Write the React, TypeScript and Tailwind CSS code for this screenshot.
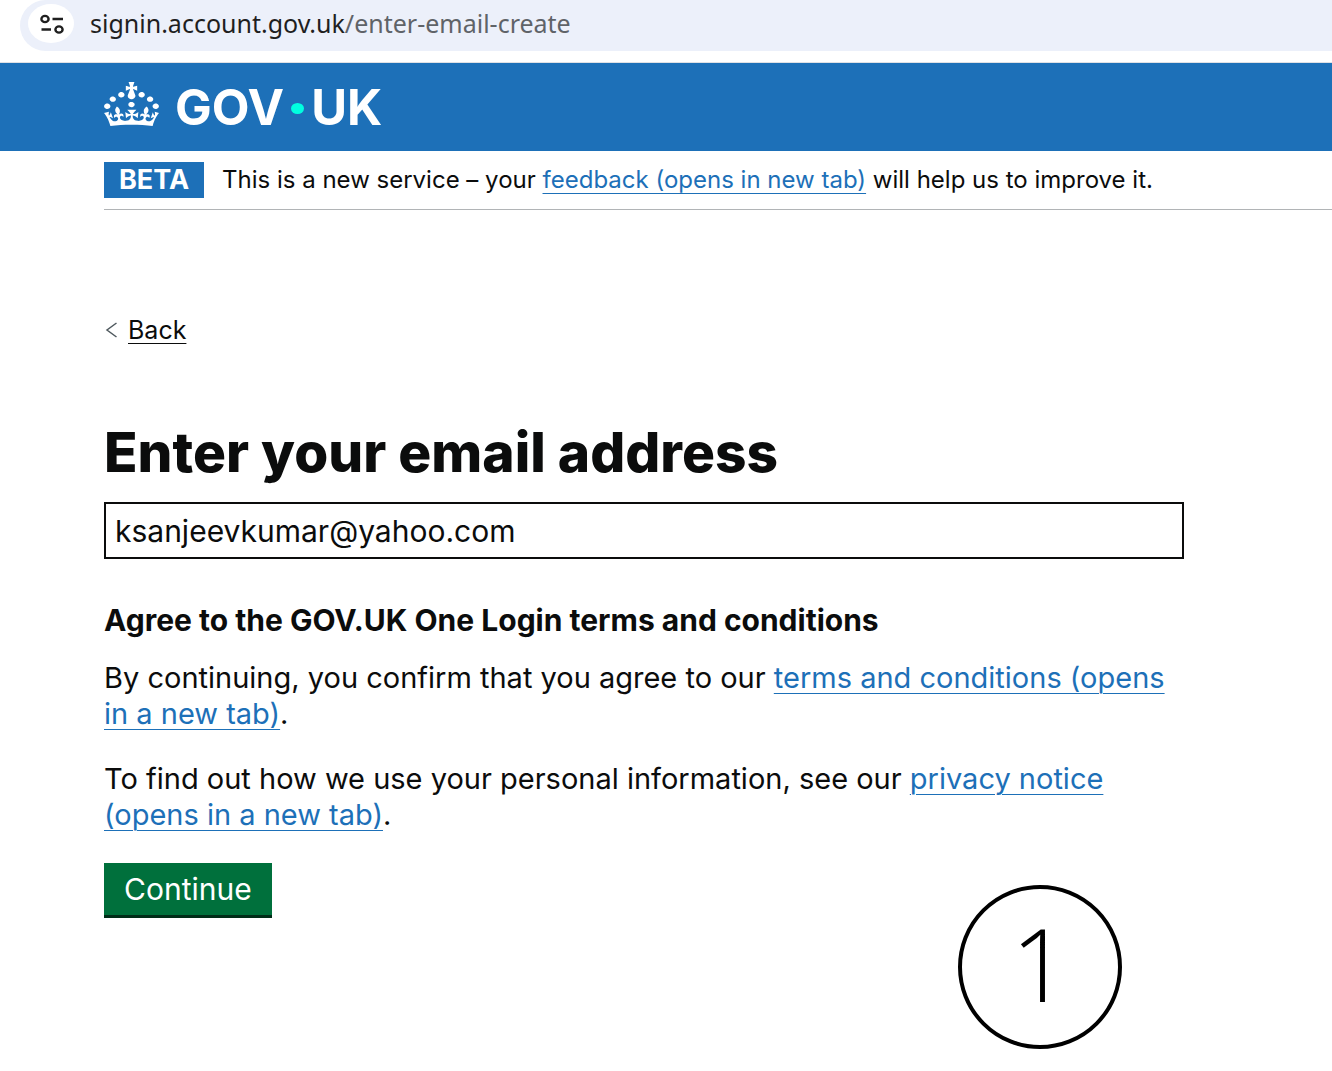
import { useState } from "react";

const link = "text-[#1d70b8] underline decoration-1 underline-offset-[5px]";
const linkTail = "inline-block underline decoration-1 underline-offset-[5px]";

function AddressBar() {
  return (
    <div className="h-[63px] border-b border-[#dfe1e5] pl-5">
      <div className="flex h-[51px] items-center rounded-bl-[26px] rounded-tl-[26px] bg-[#ecf0fa] pl-2 pb-1">
        <button
          type="button"
          aria-label="View site information"
          className="flex h-[39px] w-[46px] items-center justify-center rounded-[50%] bg-white pl-[2px]"
        >
          <svg width="24" height="20" viewBox="0 0 24 20" fill="none" stroke="#1f1f1f" strokeWidth="2.4">
            <ellipse cx="5" cy="5" rx="3.6" ry="3.1" />
            <path d="M12.5 5H23M1.5 15.5H11" />
            <ellipse cx="19" cy="15.5" rx="3.6" ry="3.1" />
          </svg>
        </button>
        <p className="pl-4 pb-[2px] font-['Noto_Sans',sans-serif] text-[25px] leading-8 whitespace-nowrap text-[#5f6368]">
          <span className="text-[#1f1f1f]">signin.account.gov.uk</span>/enter-email-create
        </p>
      </div>
    </div>
  );
}

function Crown() {
  return (
    <svg width="55" height="44" viewBox="0 0 32 30" preserveAspectRatio="none" fill="currentColor" aria-hidden="true">
      <path
        fillRule="evenodd"
        d="M22.6 10.4c-1 .4-2-.1-2.4-1-.4-.9.1-2 1-2.4.9-.4 2 .1 2.4 1s-.1 2-1 2.4m-5.9 6.7c-.9.4-2-.1-2.4-1-.4-.9.1-2 1-2.4.9-.4 2 .1 2.4 1s-.1 2-1 2.4m10.8-3.7c-1 .4-2-.1-2.4-1-.4-.9.1-2 1-2.4.9-.4 2 .1 2.4 1s0 2-1 2.4m3.3 4.8c-1 .4-2-.1-2.4-1-.4-.9.1-2 1-2.4.9-.4 2 .1 2.4 1s-.1 2-1 2.4M17 4.7l2.3 1.2V2.5l-2.3.7-.2-.2.9-3h-3.4l.9 3-.2.2c-.1.1-2.3-.7-2.3-.7v3.4L15 4.7c.1.1.1.2.2.2l-1.3 4c-.1.2-.1.4-.1.6 0 1.1.8 2 1.9 2.2h.7c1-.2 1.9-1.1 1.9-2.1 0-.2 0-.4-.1-.6l-1.3-4c-.1-.2 0-.2.1-.3m-7.6 5.7c.9.4 2-.1 2.4-1 .4-.9-.1-2-1-2.4-.9-.4-2 .1-2.4 1s0 2 1 2.4m-5 3c.9.4 2-.1 2.4-1 .4-.9-.1-2-1-2.4-.9-.4-2 .1-2.4 1s.1 2 1 2.4m-3.2 4.8c.9.4 2-.1 2.4-1 .4-.9-.1-2-1-2.4-.9-.4-2 .1-2.4 1s0 2 1 2.4m14.8 11c4.4 0 8.6.3 12.3.8 1.1-4.5 2.4-7 3.7-8.8l-2.5-.9c.2 1.3.3 1.9 0 2.7-.4-.4-.8-1.1-1.1-2.3l-1.2 4c.7-.5 1.3-.8 2-.9-1.1 2.5-2.6 3.1-3.5 3-1.1-.2-1.7-1.2-1.5-2.1.3-1.2 1.5-1.5 2.1-.1 1.1-2.3-.8-3-2-2.3 1.9-1.9 2.1-3.5.6-5.6-2.1 1.6-2.1 3.2-1.2 5.5-1.2-1.4-3.2-.6-2.5 1.6.9-1.4 2.1-.5 1.9.8-.2 1.1-1.7 2.1-3.5 1.9-2.7-.2-2.9-2.1-2.9-3.6.7-.1 1.9.5 2.9 1.9l.4-4.3c-1.1 1.1-2.1 1.4-3.2 1.4.4-1.2 2.1-3 2.1-3h-5.4s1.7 1.9 2.1 3c-1.1 0-2.1-.2-3.2-1.4l.4 4.3c1-1.4 2.2-2 2.9-1.9-.1 1.5-.2 3.4-2.9 3.6-1.9.2-3.4-.8-3.5-1.9-.2-1.3 1-2.2 1.9-.8.7-2.3-1.2-3-2.5-1.6.9-2.2.9-3.9-1.2-5.5-1.5 2-1.3 3.7.6 5.6-1.2-.7-3.1 0-2 2.3.6-1.4 1.8-1.1 2.1.1.2.9-.3 1.9-1.5 2.1-.9.2-2.4-.5-3.5-3 .6 0 1.2.3 2 .9l-1.2-4c-.3 1.1-.7 1.9-1.1 2.3-.3-.8-.2-1.4 0-2.7l-2.9.9C1.3 23 2.6 25.5 3.7 30c3.7-.5 7.9-.8 12.3-.8"
      />
    </svg>
  );
}

function Header() {
  return (
    <header className="flex h-[88px] items-center bg-[#1d70b8] pl-[104px] text-white">
      <a href="#home" aria-label="GOV.UK" className="flex items-center pb-[6px]">
        <Crown />
        <span className="ml-4 flex items-center pt-[8px] text-[49px] leading-[48px] font-bold">
          GOV
          <span className="mx-[7px] h-[11px] w-[13px] rounded-[50%] bg-[#00ffe0]" />
          UK
        </span>
      </a>
    </header>
  );
}

export default function App() {
  const [email, setEmail] = useState("ksanjeevkumar@yahoo.com");
  return (
    <div className="overflow-x-hidden bg-white font-['Inter',sans-serif] text-[#0b0c0c]">
      <AddressBar />
      <Header />
      <div className="ml-[104px] flex items-center border-b border-[#b1b4b6] pt-[11px] pb-[11px] text-[24px] leading-9">
        <strong className="bg-[#1d70b8] px-[15px] text-[27px] leading-9 font-bold text-white">BETA</strong>
        <p className="ml-[18px] whitespace-nowrap">
          This is a new service – your{" "}
          <a href="#feedback" className={link}>feedback (opens in new tab)</a> will help us to improve it.
        </p>
      </div>
      <main className="ml-[104px] max-w-[1080px] text-[29px] leading-9">
        <a href="#back" className="mt-[102px] flex items-center text-[25px]">
          <svg width="14" height="16" viewBox="0 0 14 16" fill="none" stroke="#505a5f" strokeWidth="1.5" aria-hidden="true">
            <path d="M12.5 1L3 8l9.5 7" />
          </svg>
          <span className="ml-[10px] underline decoration-1 underline-offset-[4px]">Back</span>
        </a>
        <form onSubmit={(e) => e.preventDefault()}>
          <h1 className="mt-[72px] text-[55px] leading-[64px] font-extrabold">
            <label htmlFor="email">Enter your email address</label>
          </h1>
          <input
            id="email"
            type="email"
            value={email}
            onChange={(e) => setEmail(e.target.value)}
            className="mt-[18px] block h-[57px] w-full border-2 border-[#0b0c0c] px-[9px] text-[30px]"
          />
          <h2 className="mt-[43px] text-[30px] font-bold">Agree to the GOV.UK One Login terms and conditions</h2>
          <p className="mt-[22px]">
            By continuing, you confirm that you agree to our{" "}
            <a href="#terms" className={link}>
              terms and conditions (opens <span className={linkTail}>in a new tab)</span>
            </a>
            .
          </p>
          <p className="mt-[29px]">
            To find out how we use your personal information, see our{" "}
            <a href="#privacy" className={link}>
              privacy notice <span className={linkTail}>(opens in a new tab)</span>
            </a>
            .
          </p>
          <div className="mt-[30px] flex items-start justify-between">
            <button type="submit" className="h-[55px] border-b-[3px] border-[#002d18] bg-[#00703c] px-5 text-[30px] text-white">
              Continue
            </button>
            <div className="mt-[22px] mr-[62px] flex size-[164px] items-center justify-center rounded-full border-4 border-black pb-2 font-['Open_Sans',sans-serif] text-[102px] leading-none font-light text-black">
              1
            </div>
          </div>
        </form>
      </main>
    </div>
  );
}
